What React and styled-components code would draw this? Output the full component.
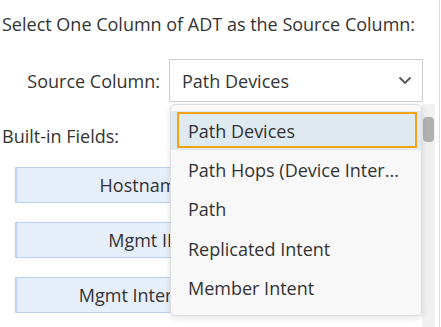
import React from "react";
import styled, { createGlobalStyle } from "styled-components";

const Global = createGlobalStyle`
  html, body { margin: 0; padding: 0; background: #fff; }
  body { font-family: "Open Sans", "Noto Sans", sans-serif; color: #333; }
`;

const Page = styled.div`
  position: relative;
  width: 439px;
  height: 327px;
  border-right: 1px solid #dcdcdc;
  overflow: hidden;
  display: flex;
  flex-direction: column;
`;

const Title = styled.div`
  margin: 13px 0 0 2px;
  font-size: 18px;
  line-height: 22px;
  white-space: nowrap;
`;

const Row = styled.div`
  display: flex;
  align-items: center;
  margin-top: 24px;
  height: 43px;
`;

const Label = styled.div`
  text-align: right;
  font-size: 18px;
  padding-right: 9px;
  box-sizing: border-box;
  width: 169px;
  white-space: nowrap;
`;

const Select = styled.div`
  box-sizing: border-box;
  width: 254px;
  height: 43px;
  border: 1px solid #cccccc;
  background: #fff;
  display: flex;
  align-items: center;
  justify-content: space-between;
  padding: 0 10px 0 12px;
  font-size: 18px;
`;

const SectionLabel = styled.div`
  margin: 23px 0 0 2px;
  font-size: 18px;
  line-height: 22px;
`;

const FieldList = styled.div`
  display: flex;
  flex-direction: column;
  gap: 19px;
  margin: 20px 0 0 15px;
`;

const FieldButton = styled.div`
  box-sizing: border-box;
  width: 255px;
  height: 36px;
  background: #e6eefa;
  border: 1px solid #b8d2f6;
  border-left-width: 2px;
  display: flex;
  align-items: center;
  justify-content: center;
  font-size: 18px;
  white-space: nowrap;
`;

const Dropdown = styled.div`
  position: absolute;
  left: 170px;
  top: 104px;
  width: 252px;
  height: 212px;
  box-sizing: border-box;
  background: #f8f8f8;
  border: 1px solid #dedede;
  border-radius: 5px;
  box-shadow: 0 2px 6px rgba(0, 0, 0, 0.12);
  padding-top: 6px;
  display: flex;
  flex-direction: column;
  z-index: 2;
`;

const Item = styled.div`
  position: relative;
  height: 39.4px;
  display: flex;
  align-items: center;
  padding-left: 17px;
  font-size: 18px;
  white-space: nowrap;
  background: ${(p) => (p.$active ? "#dfe9f0" : "transparent")};
  &::after {
    content: "";
    display: ${(p) => (p.$active ? "block" : "none")};
    position: absolute;
    top: 1px;
    bottom: 2px;
    left: 6px;
    right: 4px;
    border: 2px solid #f5a316;
  }
`;

const Track = styled.div`
  position: absolute;
  left: 422px;
  top: 104px;
  width: 13px;
  bottom: 0;
  background: #f0f0f0;
  z-index: 1;
`;

const Thumb = styled.div`
  position: absolute;
  left: 1px;
  top: 13px;
  width: 11px;
  height: 25px;
  border-radius: 4px;
  background: #b1b1b1;
`;

const items = [
  "Path Devices",
  "Path Hops (Device Inter...",
  "Path",
  "Replicated Intent",
  "Member Intent",
];

export default function App() {
  return (
    <>
      <Global />
      <Page>
        <Title>Select One Column of ADT as the Source Column:</Title>
        <Row>
          <Label>Source Column:</Label>
          <Select>
            <span>Path Devices</span>
            <svg width="14" height="9" viewBox="0 0 14 9">
              <path d="M1.5 1.5 L7 7 L12.5 1.5" fill="none" stroke="#555" strokeWidth="1.8" />
            </svg>
          </Select>
        </Row>
        <SectionLabel>Built-in Fields:</SectionLabel>
        <FieldList>
          <FieldButton>Hostname</FieldButton>
          <FieldButton>Mgmt IP</FieldButton>
          <FieldButton>Mgmt Interface</FieldButton>
        </FieldList>
        <Dropdown>
          {items.map((t, i) => (
            <Item key={t} $active={i === 0}>{t}</Item>
          ))}
        </Dropdown>
        <Track>
          <Thumb />
        </Track>
      </Page>
    </>
  );
}
